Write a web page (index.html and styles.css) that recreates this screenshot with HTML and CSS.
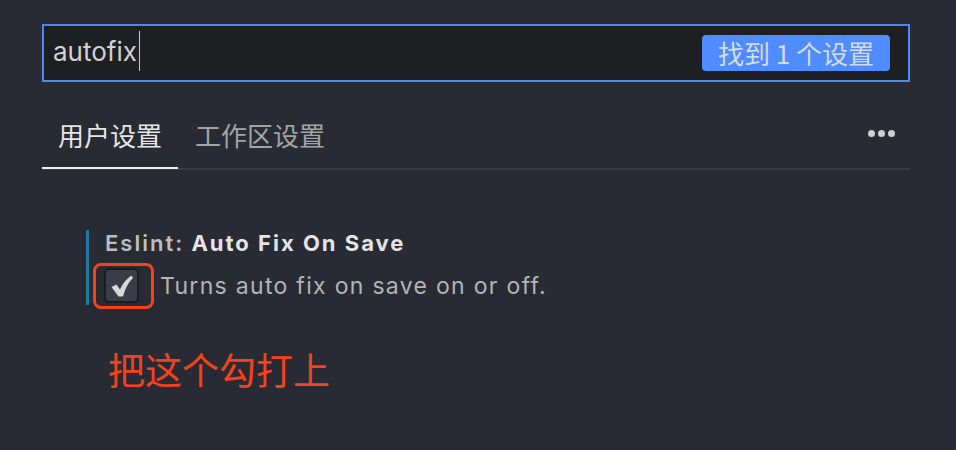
FILE: index.html
```html
<!DOCTYPE html>
<html lang="zh">
<head>
<meta charset="utf-8">
<link rel="stylesheet" href="styles.css">
</head>
<body>
<div class="page">
  <div class="search">
    <span class="query">autofix</span><span class="caret"></span>
    <span class="badge">找到 1 个设置</span>
  </div>
  <div class="tabs">
    <div class="tab active">用户设置</div>
    <div class="tab">工作区设置</div>
    <div class="more"><span></span><span></span><span></span></div>
  </div>
  <div class="setting">
    <div class="bar"></div>
    <div class="content">
      <div class="title"><span class="cat">Eslint:</span> Auto Fix On Save</div>
      <div class="row">
        <div class="check-wrap">
          <div class="checkbox">
            <svg width="24" height="24" viewBox="0 0 24 24"><path d="M1.5 13 L6.5 10.5 L10 15.5 C12.5 9.5 16.5 5 21.5 1.5 L23 4 C18.5 8.5 15.5 14 13 22.5 L8.5 22.5 Z" fill="#d8d8d8"/></svg>
          </div>
          <div class="ring"></div>
        </div>
        <div class="desc">Turns auto fix on save on or off.</div>
      </div>
    </div>
  </div>
  <div class="note">把这个勾打上</div>
</div>
</body>
</html>
```

FILE: styles.css
```css
html, body {
  margin: 0;
  padding: 0;
  background: #282b34;
  font-family: Inter, "Noto Sans CJK SC", sans-serif;
}
.page {
  width: 956px;
  height: 450px;
  padding: 24px 46px 0 42px;
  box-sizing: border-box;
  display: flex;
  flex-direction: column;
}
.search {
  height: 58px;
  box-sizing: border-box;
  border: 2px solid #4c88f2;
  background: #1e1f23;
  display: flex;
  align-items: center;
  padding: 0 18px 0 9px;
}
.query {
  color: #d2d2d2;
  font-size: 26px;
  line-height: 30px;
  position: relative;
  top: -1px;
}
.caret {
  width: 1px;
  height: 40px;
  background: #c8c8c8;
  margin-left: 2px;
  position: relative;
  top: -2px;
}
.badge {
  margin-left: auto;
  background: #4f8cff;
  color: #d5dbe6;
  font-family: "Noto Sans CJK SC", sans-serif;
  font-size: 26px;
  height: 36px;
  line-height: 36px;
  padding: 0 16px;
  border-radius: 4px;
}
.tabs {
  display: flex;
  align-items: center;
  height: 88px;
  box-sizing: border-box;
  border-bottom: 2px solid #3a3c40;
  padding-top: 20px;
}
.tab {
  font-family: "Noto Sans CJK SC", sans-serif;
  font-size: 26px;
  color: #a4a4a4;
  height: 66px;
  line-height: 64px;
  padding: 0 16px;
  box-sizing: border-box;
  margin-bottom: -2px;
}
.tab.active {
  color: #e6e6e6;
  border-bottom: 2px solid #eeeeee;
}
.tab + .tab {
  padding-left: 17px;
}
.more {
  margin-left: auto;
  display: flex;
  gap: 3px;
  margin-right: 15px;
  margin-top: -4px;
}
.more span {
  width: 7px;
  height: 7px;
  border-radius: 50%;
  background: #cfcfcf;
}
.setting {
  display: flex;
  margin-top: 60px;
  margin-left: 44px;
}
.bar {
  width: 3px;
  height: 75px;
  background: #1d7aa0;
  margin-right: 16px;
}
.content {
  display: flex;
  flex-direction: column;
}
.title {
  font-size: 22px;
  font-weight: 700;
  color: #e4e4e4;
  line-height: 26px;
  letter-spacing: 2px;
}
.title .cat {
  font-weight: 600;
  color: #bdbdbd;
}
.row {
  display: flex;
  align-items: center;
  margin-top: 12px;
}
.check-wrap {
  position: relative;
  width: 35px;
  height: 35px;
  margin-left: -1px;
}
.checkbox {
  width: 35px;
  height: 35px;
  box-sizing: border-box;
  border: 2px solid #1b1c20;
  border-radius: 5px;
  background: #3a3d47;
  display: flex;
  align-items: center;
  justify-content: center;
}
.ring {
  position: absolute;
  left: -11px;
  top: -5px;
  width: 61px;
  height: 46px;
  box-sizing: border-box;
  border: 3px solid #f5421c;
  border-radius: 8px;
}
.desc {
  margin-left: 21px;
  font-size: 23px;
  letter-spacing: 1.3px;
  color: #b4b4b4;
  line-height: 30px;
}
.note {
  margin-top: 40px;
  margin-left: 66px;
  font-family: "Noto Sans CJK SC", sans-serif;
  font-size: 37px;
  color: #f5421c;
  line-height: 48px;
}
```
